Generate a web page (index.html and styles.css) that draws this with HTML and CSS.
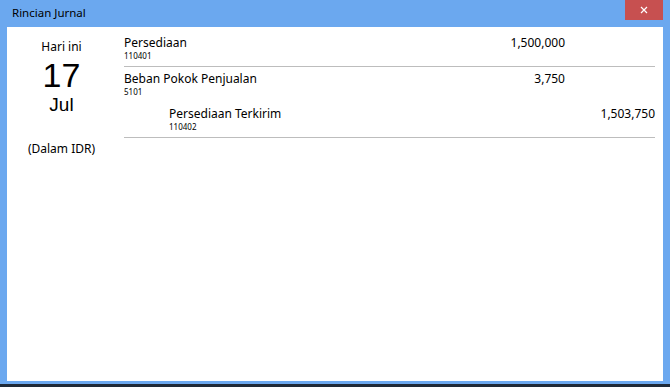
FILE: index.html
```html
<!DOCTYPE html>
<html lang="id">
<head>
    <meta charset="UTF-8">
    <meta name="viewport" content="width=device-width, initial-scale=1.0">
    <title>Rincian Jurnal</title>
    <link rel="stylesheet" href="styles.css">
</head>
<body>
    <div class="window">
        <div class="titlebar">
            <span class="title">Rincian Jurnal</span>
            <button class="close" type="button" aria-label="Tutup">
                <svg width="8" height="8" viewBox="0 0 8 8">
                    <path d="M1 1 L7 7 M7 1 L1 7" stroke="#fff" stroke-width="1.2" fill="none"/>
                </svg>
            </button>
        </div>

        <div class="panel">
            <div class="date">
                <div class="today">Hari ini</div>
                <div class="day">17</div>
                <div class="month">Jul</div>
                <div class="currency">(Dalam IDR)</div>
            </div>

            <div class="entries">
                <div class="entry sep">
                    <div class="account">
                        <div class="name">Persediaan</div>
                        <div class="code">110401</div>
                    </div>
                    <div class="amount">1,500,000</div>
                    <div class="amount"></div>
                </div>
                <div class="entry">
                    <div class="account">
                        <div class="name">Beban Pokok Penjualan</div>
                        <div class="code">5101</div>
                    </div>
                    <div class="amount">3,750</div>
                    <div class="amount"></div>
                </div>
                <div class="entry sep">
                    <div class="account credit">
                        <div class="name">Persediaan Terkirim</div>
                        <div class="code">110402</div>
                    </div>
                    <div class="amount"></div>
                    <div class="amount">1,503,750</div>
                </div>
            </div>
        </div>
    </div>
</body>
</html>
```

FILE: styles.css
```css
html, body {
    margin: 0;
    padding: 0;
}
body {
    font-family: "Noto Sans", "DejaVu Sans", sans-serif;
    color: #000;
    background: #1f2a38;
}
.window {
    height: 387px;
    box-sizing: border-box;
    display: flex;
    flex-direction: column;
    background: #6ba8ef;
    padding: 0 7px 3px 7px;
    border-bottom: 3px solid #1f2a38;
}
.titlebar {
    height: 27px;
    display: flex;
    align-items: flex-start;
    justify-content: space-between;
}
.title {
    font-size: 11.5px;
    line-height: 14px;
    margin: 6px 0 0 5px;
    color: #000;
}
.close {
    width: 38px;
    height: 20px;
    border: none;
    padding: 0;
    background: #c75050;
    display: flex;
    align-items: center;
    justify-content: center;
}
.panel {
    flex: 1;
    background: #fff;
    display: flex;
    gap: 8px;
    padding: 4px 8px 0 0;
}
.date {
    width: 109px;
    text-align: center;
}
.today {
    font-size: 12px;
    line-height: 16px;
    margin-top: 8px;
}
.day {
    font-family: "Liberation Sans", Arial, sans-serif;
    font-size: 34px;
    line-height: 36px;
    margin-top: 2px;
}
.month {
    font-family: "Liberation Sans", Arial, sans-serif;
    font-size: 19px;
    line-height: 22px;
    margin-top: 1px;
}
.currency {
    font-size: 12px;
    line-height: 16px;
    margin-top: 25px;
}
.entries {
    flex: 1;
}
.entry {
    display: grid;
    grid-template-columns: 1fr 100px 90px;
    padding: 4px 0 5px;
}
.entry.sep {
    border-bottom: 1px solid #bdbdbd;
}
.account.credit {
    padding-left: 45px;
}
.name, .amount {
    font-size: 12px;
    line-height: 16px;
}
.code {
    font-size: 8px;
    line-height: 10px;
}
.amount {
    text-align: right;
}
```
